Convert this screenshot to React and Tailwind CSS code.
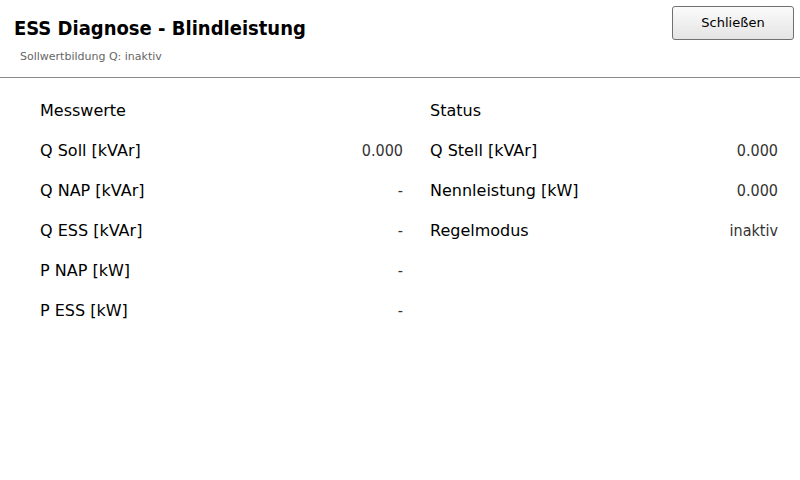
import React from 'react';

const cond = { fontFamily: '"DejaVu Sans Condensed", "DejaVu Sans", sans-serif' };
const wide = { fontFamily: '"DejaVu Sans", sans-serif' };

const messwerte = [
  ['Q Soll [kVAr]', '0.000'],
  ['Q NAP [kVAr]', '-'],
  ['Q ESS [kVAr]', '-'],
  ['P NAP [kW]', '-'],
  ['P ESS [kW]', '-'],
];

const status = [
  ['Q Stell [kVAr]', '0.000'],
  ['Nennleistung [kW]', '0.000'],
  ['Regelmodus', 'inaktiv'],
];

function Column({ title, rows, width }) {
  return (
    <div className={`flex flex-col ${width}`}>
      <div className="h-10 flex items-center text-[16px] text-black" style={wide}>{title}</div>
      {rows.map(([label, value]) => (
        <div key={label} className="h-10 flex items-center justify-between">
          <span className="text-[16px] text-black" style={wide}>{label}</span>
          <span className="text-[16px] text-[#333]" style={cond}>{value}</span>
        </div>
      ))}
    </div>
  );
}

export default function App() {
  return (
    <div className="w-[800px] h-[480px] bg-white overflow-hidden" style={cond}>
      <div className="h-[78px] flex justify-between border-b border-[#8a8a8a]">
        <div className="pl-[14px] pt-[15px]">
          <h1 className="text-[20px] font-bold leading-[26px] text-black">ESS Diagnose - Blindleistung</h1>
          <p className="pl-[6px] mt-[9px] text-[11px] leading-[14px] text-[#666]" style={wide}>Sollwertbildung Q: inaktiv</p>
        </div>
        <div className="pr-[6px] pt-[6px]">
          <button className="w-[122px] h-[34px] rounded-[3px] border border-[#707070] bg-gradient-to-b from-[#fbfbfb] to-[#e4e4e4] text-[13px] text-black" style={wide}>
            Schließen
          </button>
        </div>
      </div>
      <div className="flex pl-[40px] pt-[13px] gap-[27px]">
        <Column title="Messwerte" rows={messwerte} width="w-[363px]" />
        <Column title="Status" rows={status} width="w-[348px]" />
      </div>
    </div>
  );
}
